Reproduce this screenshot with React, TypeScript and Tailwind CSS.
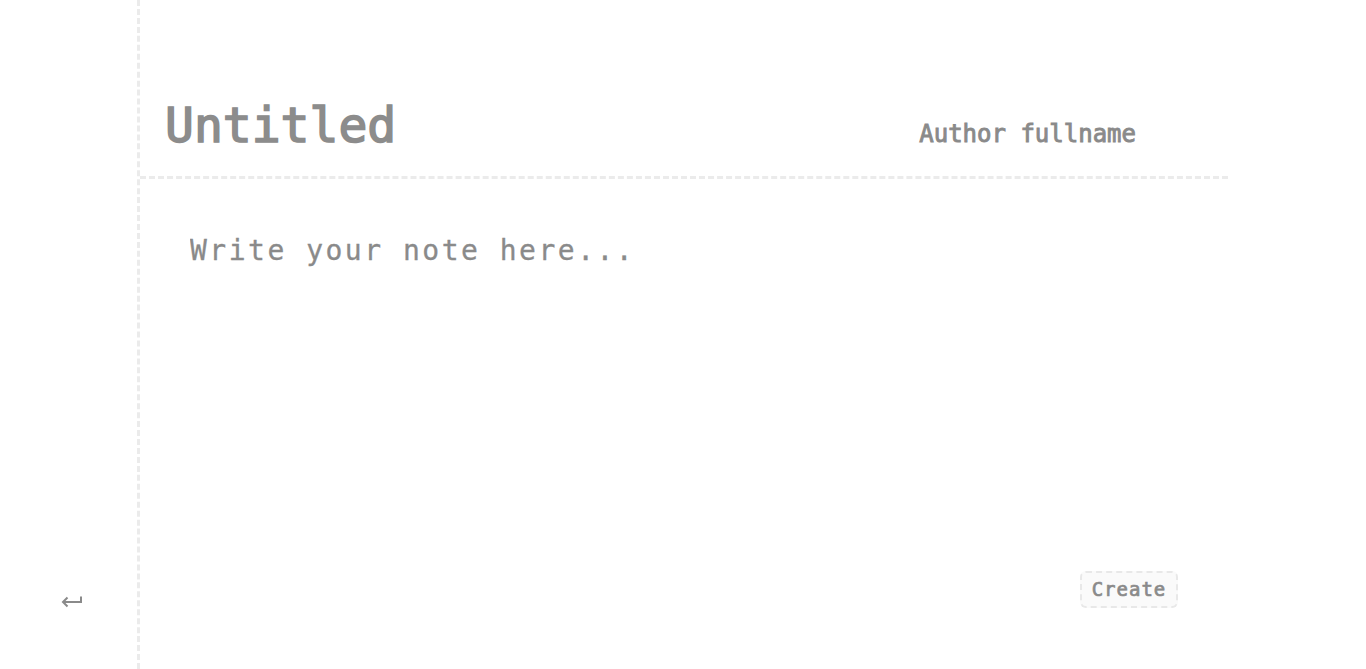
import React from "react";

export default function App() {
  return (
    <div
      className="flex h-screen w-full bg-white text-[#8a8a8a]"
      style={{ fontFamily: '"DejaVu Sans Mono", "Liberation Mono", monospace' }}
    >
      <aside className="flex w-[137px] shrink-0 flex-col justify-end pb-[60px] pl-[61px]">
        <button aria-label="Back" className="h-[14px] w-[22px]">
          <svg width="22" height="14" viewBox="0 0 22 14" fill="none" stroke="#8a8a8a" strokeWidth="2">
            <path d="M20 1.5 V7 H2" />
            <path d="M6.5 2.5 L2 7 L6.5 11.5" />
          </svg>
        </button>
      </aside>
      <main className="flex w-[1091px] shrink-0 flex-col border-l-[3px] border-dashed border-[#ebebeb]">
        <header className="box-border flex h-[179px] shrink-0 items-baseline justify-between border-b-[3px] border-dashed border-[#ebebeb] pl-[25px] pr-[92px] pt-[101px]">
          <h1 className="text-[48px] font-normal leading-none text-[#8c8c8c] [-webkit-text-stroke:1.6px_#8c8c8c]">
            Untitled
          </h1>
          <span className="text-[24px] font-normal leading-none text-[#8a8a8a] [-webkit-text-stroke:0.9px_#8a8a8a]">
            Author fullname
          </span>
        </header>
        <textarea
          placeholder="Write your note here..."
          className="ml-[50px] mt-[51px] flex-1 resize-none bg-transparent text-[28px] leading-[1.5] tracking-[2.5px] text-[#8a8a8a] outline-none placeholder:text-[#8a8a8a] [-webkit-text-stroke:0.3px_#8a8a8a]"
        />
        <div className="flex justify-end pb-[61px] pr-[50px] pt-[20px]">
          <button className="h-[37px] w-[98px] rounded-md border-2 border-dashed border-[#e8e8e8] bg-[#fafafa] text-[19px] font-normal tracking-[1px] text-[#8a8a8a] [-webkit-text-stroke:0.7px_#8a8a8a]">
            Create
          </button>
        </div>
      </main>
    </div>
  );
}
